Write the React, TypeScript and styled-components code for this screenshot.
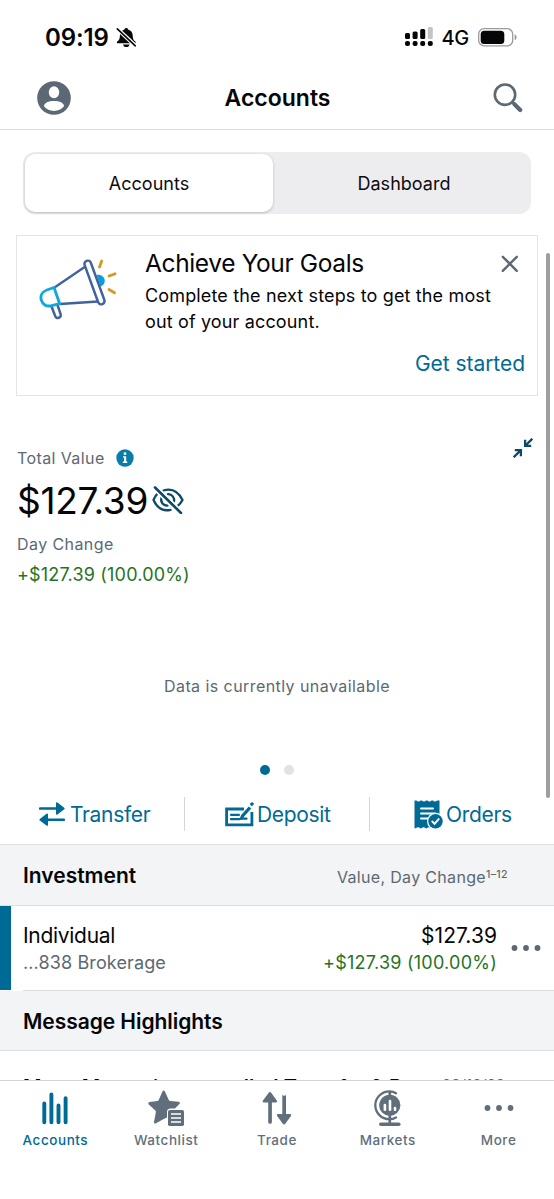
import React from "react";
import styled, { createGlobalStyle } from "styled-components";

const blue = "#006a96";
const navy = "#0b4a68";
const slate = "#5c6873";
const green = "#1f7424";
const line = "#dcdee0";
const band = "#f2f4f6";

const GlobalStyle = createGlobalStyle`
  * { box-sizing: border-box; }
  body { margin: 0; background: #fff; }
`;

const Screen = styled.div`
  position: relative;
  display: flex;
  flex-direction: column;
  width: 554px;
  height: 1199px;
  overflow: hidden;
  background: #fff;
  color: #060608;
  font-family: Inter, "Liberation Sans", sans-serif;
  svg { display: block; flex: none; }
`;

const Label = styled.span<{
  $size: number;
  $weight?: number;
  $track?: number;
  $color?: string;
  $lh?: number;
}>`
  font-size: ${(p) => p.$size}px;
  font-weight: ${(p) => p.$weight ?? 400};
  letter-spacing: ${(p) => p.$track ?? 0}px;
  color: ${(p) => p.$color ?? "inherit"};
  line-height: ${(p) => (p.$lh ? `${p.$lh}px` : "normal")};
  white-space: nowrap;
`;

const StatusBar = styled.div`
  display: flex;
  align-items: center;
  justify-content: space-between;
  height: 74px;
  padding: 0 37px 0 45px;
`;

const StatusGroup = styled.div<{ $gap: number }>`
  display: flex;
  align-items: center;
  gap: ${(p) => p.$gap}px;
`;

const Network = styled.span`
  padding-top: 2px;
  font-size: 20px;
  font-weight: 450;
  line-height: 26px;
  letter-spacing: -0.3px;
`;

const Header = styled.header`
  display: grid;
  grid-template-columns: 34px 1fr 30px;
  align-items: center;
  height: 56px;
  padding: 0 31px 8px 37px;
  border-bottom: 1px solid ${line};
`;

const Title = styled.h1`
  margin: 0 5px 0 -4px;
  padding-top: 1px;
  text-align: center;
  font-size: 23px;
  font-weight: 600;
  letter-spacing: 0;
`;

const Segments = styled.div`
  display: flex;
  height: 62px;
  margin: 22px 23px 0;
  padding: 2px;
  border-radius: 12px;
  background: #ededef;
`;

const Segment = styled.button<{ $on?: boolean }>`
  flex: ${(p) => (p.$on ? "0 0 248px" : "1")};
  padding: 1px 0 0;
  padding-left: ${(p) => (p.$on ? 0 : 6)}px;
  border: 0;
  border-radius: 10px;
  background: ${(p) => (p.$on ? "#fff" : "transparent")};
  box-shadow: ${(p) => (p.$on ? "0 1px 3px rgba(0,0,0,.22)" : "none")};
  color: #0c0c0e;
  font: 400 18px Inter, sans-serif;
  letter-spacing: 0.02px;
`;

const Promo = styled.section`
  display: grid;
  grid-template-columns: 128px 1fr 18px;
  height: 161px;
  margin: 21px 16px 0;
  padding: 11px 18px 0 0;
  border: 1px solid #e3e4e6;
`;

const PromoArt = styled.div`
  padding: 12px 0 0 22px;
`;

const PromoBody = styled.div`
  display: flex;
  flex-direction: column;
`;

const PromoText = styled.p`
  margin: 4px 0 0;
  font-size: 18px;
  line-height: 26px;
  letter-spacing: 0.15px;
  white-space: nowrap;
`;

const PromoClose = styled.div`
  padding-top: 8px;
`;

const PromoLink = styled.a`
  align-self: flex-end;
  margin: 15px -24px 0 0;
  color: ${blue};
  font-size: 21px;
  line-height: 28px;
  letter-spacing: -0.05px;
`;

const Summary = styled.section`
  display: flex;
  justify-content: space-between;
  height: 275px;
  padding: 47px 21px 0 17px;
`;

const Figures = styled.div`
  display: flex;
  flex-direction: column;
  align-items: flex-start;
`;

const FigureRow = styled.div<{ $h: number; $gap: number }>`
  display: flex;
  align-items: center;
  height: ${(p) => p.$h}px;
  gap: ${(p) => p.$gap}px;
`;

const CollapseSlot = styled.div`
  margin-top: -5px;
`;

const Unavailable = styled.p`
  margin: 0;
  text-align: center;
  color: ${slate};
  font-size: 16px;
  line-height: 30px;
  letter-spacing: 0.43px;
`;

const Dots = styled.div`
  display: flex;
  justify-content: center;
  gap: 14px;
  margin: 64px 1px 0 0;
`;

const Dot = styled.i<{ $on?: boolean }>`
  width: 10px;
  height: 10px;
  border-radius: 50%;
  background: ${(p) => (p.$on ? blue : "#e1e2e4")};
`;

const Actions = styled.div`
  display: grid;
  grid-template-columns: 185px 185px 184px;
  height: 34px;
  margin: 22px 0 13px;
`;

const Action = styled.button<{ $lead: number }>`
  display: flex;
  align-items: center;
  gap: 4px;
  padding: 0 0 0 ${(p) => p.$lead}px;
  border: 0;
  border-right: 1px solid #d3d5d7;
  background: none;
  color: ${blue};
  font-family: inherit;
  &:last-child { border-right: 0; }
`;

const Band = styled.div<{ $h: number; $top?: boolean }>`
  display: flex;
  align-items: center;
  justify-content: space-between;
  height: ${(p) => p.$h}px;
  padding: ${(p) => (p.$top ? 0 : 2)}px 46px 0 23px;
  background: ${band};
  border-top: ${(p) => (p.$top ? `1px solid ${line}` : "0")};
  border-bottom: 1px solid ${line};
`;

const ColumnNote = styled.span`
  padding-top: 3px;
  color: ${slate};
  font-size: 16px;
  letter-spacing: 0.32px;
  white-space: nowrap;
`;

const Footnote = styled.sup`
  font-size: 10.5px;
  font-weight: 500;
  line-height: 0;
  vertical-align: 5px;
  letter-spacing: 0.4px;
`;

const AccountRow = styled.div`
  display: flex;
  align-items: center;
  height: 84px;
  padding: 2px 13px 0 12px;
  border-left: 11px solid ${blue};
`;

const Stack = styled.div<{ $end?: boolean }>`
  display: flex;
  flex-direction: column;
  align-items: ${(p) => (p.$end ? "flex-end" : "flex-start")};
  margin-left: ${(p) => (p.$end ? "auto" : "0")};
`;

const RowMenu = styled.div`
  margin: -2px 0 0 14px;
`;

const InsetRule = styled.hr`
  width: 531px;
  height: 1px;
  margin: 0 0 0 23px;
  border: 0;
  background: ${line};
`;

const Message = styled.div`
  display: flex;
  justify-content: space-between;
  height: 29px;
  padding: 23px 49px 0 23px;
  overflow: hidden;
`;

const TabBar = styled.nav`
  display: grid;
  grid-template-columns: repeat(5, 110.8px);
  flex: 1;
  border-top: 1px solid #d3d5d7;
  background: #fff;
`;

const Tab = styled.a<{ $on?: boolean }>`
  display: flex;
  flex-direction: column;
  align-items: center;
  gap: 6px;
  padding-top: 9px;
  color: ${(p) => (p.$on ? blue : "#616f7c")};
`;

const ScrollThumb = styled.div`
  position: absolute;
  top: 253px;
  right: 4px;
  width: 4px;
  height: 545px;
  border-radius: 2px;
  background: #9e9e9f;
`;

const BellOff = () => (
  <svg width="21" height="21" viewBox="0 0 21 21">
    <path fill="#060608" d="M10.300 1c-1 0-1.800.7-2 1.700C5.500 3.500 4 5.500 3.900 8.500c0 3.200-.8 4.500-2.600 6-.8.800-.4 1.800.6 1.800h16.800c1 0 1.400-1 .6-1.800-1.800-1.500-2.600-2.800-2.600-6 0-3-1.600-5-4.400-5.800-.2-1-1-1.700-2-1.700zM7 17.500h6.600c-.3 1.600-1.600 2.600-3.300 2.600s-3-1-3.300-2.600z" />
    <path stroke="#fff" strokeWidth="4" d="M0 .6l21 19.600" />
    <path stroke="#060608" strokeWidth="1.600" strokeLinecap="round" d="M1.300 1.800l18 17" />
  </svg>
);

const Signal = () => (
  <svg width="28" height="20" viewBox="0 0 28 20" fill="#060608">
    <rect x="0" y="6" width="5" height="6" rx="1.500" />
    <rect x="7.600" y="4.500" width="5" height="7.500" rx="1.500" />
    <rect x="15.200" y="2" width="5" height="10" rx="1.500" />
    <rect x="22.800" y="0" width="5" height="12" rx="1.500" fill="#c4c4c6" />
    {[0, 7.6, 15.2, 22.8].map((x) => (
      <rect key={x} x={x} y="14" width="5" height="5" rx="2" />
    ))}
  </svg>
);

const Battery = () => (
  <svg width="39" height="19" viewBox="0 0 39 19">
    <rect x=".7" y=".7" width="34" height="17.200" rx="5.500" fill="none" stroke="#9b9b9d" strokeWidth="1.300" />
    <rect x="2.700" y="2.700" width="23.600" height="13.200" rx="3.500" fill="#060608" />
    <path d="M36.600 6.300c1.300.4 2 1.700 2 3s-.7 2.600-2 3z" fill="#9b9b9d" />
  </svg>
);

const Profile = () => (
  <svg width="34" height="34" viewBox="0 0 34 34">
    <circle cx="17" cy="17" r="16.800" fill={slate} />
    <ellipse cx="17" cy="11.200" rx="5.200" ry="6" fill="#fff" />
    <path d="M7 25.300c0-3.400 4.500-5.300 10-5.300s10 1.900 10 5.300c-2.400 3-5.900 4.600-10 4.600s-7.600-1.600-10-4.600z" fill="#fff" />
  </svg>
);

const Search = () => (
  <svg width="30" height="30" viewBox="0 0 30 30" fill="none" stroke={slate}>
    <circle cx="12" cy="11.700" r="10.200" strokeWidth="2.600" />
    <path d="M19.300 19.100l2.500 2.500" strokeWidth="2.600" />
    <path d="M21.500 21.300l5.700 5.700" strokeWidth="4.200" strokeLinecap="round" />
  </svg>
);

const Megaphone = () => (
  <svg width="78" height="62" viewBox="0 0 78 62" fill="none" strokeLinecap="round" strokeLinejoin="round">
    <path d="M57.500 15.800c3.800-.5 7.400 1.200 8.100 4.600.7 3.200-1 6-4.300 6.900z" fill="#0c9ddb" />
    <path d="M15.500 28.500L46 7.800M21 45l38-2.500" stroke="#41629f" strokeWidth="2.300" />
    <rect x="-3.300" y="-23" width="6.600" height="46" rx="3.300" transform="translate(55.500 23.500) rotate(-20)" fill="#fff" stroke="#41629f" strokeWidth="2.500" />
    <path d="M12.500 47.500l3.600 9.300c.5 1.700 1.900 2.600 3.600 2s2.500-2 1.900-3.700L18.500 46" stroke="#41629f" strokeWidth="2.500" />
    <path d="M15 28.500l5.700 16.200-8.800 2.100c-4.500 1-8.300-1.600-9.500-5.400-1.400-4.400.7-8.700 5.500-10.400z" fill="#fff" stroke="#11a7d9" strokeWidth="2.900" />
    <path d="M60.500 8l2.200-6M70 17l6-2.200M70 30.500l5.500 3.300" stroke="#d99a1c" strokeWidth="2.900" />
  </svg>
);

const Close = () => (
  <svg width="18" height="18" viewBox="0 0 18 18" stroke={slate} strokeWidth="2.400" strokeLinecap="round">
    <path d="M1.800 1.800l14 14M15.800 1.800l-14 14" />
  </svg>
);

const Info = () => (
  <svg width="18" height="18" viewBox="0 0 18 18">
    <circle cx="9" cy="9" r="8.700" fill="#087da9" />
    <circle cx="9" cy="4.700" r="1.400" fill="#fff" />
    <path d="M7 7.300h3.200v5.300h1.100v1.300H6.800v-1.300H8V8.600H7z" fill="#fff" />
  </svg>
);

const EyeOff = () => (
  <svg width="32" height="28" viewBox="0 0 32 28" fill="none" stroke={navy} strokeWidth="2.300" strokeLinecap="round">
    <path d="M11.500 4.500c8.500-2.500 15 1.500 19 9.500-1.400 2.600-3 4.700-5.200 6.300M6 7.200C4 9 2.700 11 1.500 14c3.700 8 10 11.500 17 9.800" />
    <path d="M16 8.200c4-.2 6.800 3.600 6 7.300M9.500 11.500c-1.400 5 2 8.200 6 8.200" />
    <path d="M3 1.500l26 25.500" stroke="#fff" strokeWidth="6" strokeLinecap="butt" />
    <path d="M3 1.500l26 25.500" strokeWidth="2.600" />
  </svg>
);

const Collapse = () => (
  <svg width="20" height="20" viewBox="0 0 20 20" fill="none" stroke={navy} strokeWidth="2.300">
    <path d="M19.300.7l-7 7M12.100 1.800v6.100h6.100M.7 19.300l7-7M1.800 12.100h6.100v6.100" />
  </svg>
);

const TransferIcon = () => (
  <svg width="26" height="24" viewBox="0 0 26 24" fill={blue}>
    <path d="M1 5.300h16V1.200c0-.9.900-1.200 1.500-.6l6.700 5.100c.6.500.6 1.200 0 1.600l-6.700 5.100c-.6.500-1.500.2-1.500-.7V7.800H1a1.250 1.250 0 010-2.500zM25 16.500H9v-4.100c0-.9-.9-1.200-1.500-.6L.8 16.900c-.6.500-.6 1.200 0 1.600l6.700 5.100c.6.500 1.500.2 1.500-.7V19h16a1.250 1.250 0 000-2.500z" />
  </svg>
);

const DepositIcon = () => (
  <svg width="29" height="25" viewBox="0 0 29 25" fill="none" stroke={blue}>
    <path d="M19 7H1.600v15.800h25.300V10" strokeWidth="2.800" />
    <path d="M6 12.800h8M6 17.200h8l2.500-.5h5" strokeWidth="2.300" strokeLinecap="round" />
    <path d="M17 14.500l8-9" strokeWidth="3.300" />
    <path d="M26.800 2.200l.3-.3" strokeWidth="3.300" strokeLinecap="round" />
    <path d="M14.300 17.700l2-5 3 2.300z" fill={blue} stroke="none" />
  </svg>
);

const OrdersIcon = () => (
  <svg width="29" height="29" viewBox="0 0 29 29">
    <path fill={blue} d="M.5.500h2a2.200 1.600 0 004 0h1.500a2.200 1.600 0 004 0h1.500a2.200 1.600 0 004 0h1.500a2.200 1.600 0 004 0h2.500v27.800h-3a2.200 1.600 0 00-4 0h-1.500a2.200 1.600 0 00-4 0h-1.500a2.200 1.600 0 00-4 0h-1.500a2.200 1.600 0 00-4 0h-1.500z" />
    <path stroke="#fff" strokeWidth="2" strokeLinecap="round" d="M7 8.500h12M7 13.500h14M7 18.500h7" />
    <circle cx="21.500" cy="21.300" r="8.500" fill="#fff" />
    <circle cx="21.500" cy="21.300" r="7.200" fill={blue} />
    <path fill="none" stroke="#fff" strokeWidth="1.900" strokeLinecap="round" d="M18.300 21.500l2.300 2.400 4.100-4.800" />
  </svg>
);

const Ellipsis = ({ color }: { color: string }) => (
  <svg width="30" height="36" viewBox="0 0 30 36" fill={color}>
    <circle cx="3.500" cy="18" r="2.900" />
    <circle cx="15" cy="18" r="2.900" />
    <circle cx="26.500" cy="18" r="2.900" />
  </svg>
);

const BarsIcon = () => (
  <svg width="26" height="36" viewBox="0 0 26 36" stroke={blue} strokeWidth="3.900" strokeLinecap="round">
    <path d="M2.300 13.400V32.300M9.400 4.500V32.300M16.500 15.400V32.300M23.600 8.200V32.300" />
  </svg>
);

const StarList = () => (
  <svg width="36" height="36" viewBox="0 0 36 36" fill="#616f7c">
    <path d="M14.500 1.500c.6-1.300 1.800-1.300 2.400 0l3.900 8.500c.3.700.8 1 1.500 1.100l8.300.7c1.300.2 1.700 1.400.8 2.300l-4.400 4.400h-4.500c-2.300 0-3.500 1.400-3.500 3.600v5.300l-3.300 1.600-7.700 4.300c-1.100.6-2.200-.2-2-1.400l1.800-9.500c.2-.7 0-1.300-.5-1.800L.8 14.400c-.9-.9-.5-2.100.8-2.300l7.600-1c.7-.1 1.200-.5 1.500-1.100z" />
    <rect x="20" y="20" width="16" height="16" rx="1.800" />
    <path stroke="#fff" strokeWidth="1.500" d="M23 24h10M23 28h10M23 32h10" />
  </svg>
);

const TradeIcon = () => (
  <svg width="30" height="36" viewBox="0 0 30 36" fill="#616f7c">
    <path d="M6.200 32V12.500H2c-1.400 0-1.800-1-1-2l5.700-7.700c.8-1 1.700-1 2.500 0l5.600 7.700c.8 1 .4 2-1 2H9.900V32a1.850 1.850 0 01-3.700 0zM20.300 4V24h-4.100c-1.400 0-1.800 1-1 2l5.600 7.700c.8 1 1.700 1 2.500 0l5.600-7.700c.8-1 .4-2-1-2h-3.900V4a1.850 1.850 0 01-3.700 0z" />
  </svg>
);

const GlobeIcon = () => (
  <svg width="27" height="36" viewBox="0 0 27 36" fill="none" stroke="#616f7c">
    <path d="M22 3.200C20 1.900 17.800 1.400 15.500 1.400 7.500 1.400 1.300 7.800 1.300 15.300S7.500 29.200 15.500 29.200c2.300 0 4.500-.6 6.500-1.800" strokeWidth="2.300" strokeLinecap="round" />
    <circle cx="15.800" cy="15.300" r="10.600" fill="#616f7c" stroke="none" />
    <path d="M15.800 2v5M15.800 25v9" strokeWidth="2.700" />
    <path d="M6.800 34.200h18" strokeWidth="3.500" strokeLinecap="round" />
    <path d="M10.900 15v4.800M16 11v8.800M21 18v1.800" stroke="#fff" strokeWidth="2.600" strokeLinecap="round" />
  </svg>
);

const tabs = [
  { name: "Accounts", icon: <BarsIcon /> },
  { name: "Watchlist", icon: <StarList /> },
  { name: "Trade", icon: <TradeIcon /> },
  { name: "Markets", icon: <GlobeIcon /> },
  { name: "More", icon: <Ellipsis color="#616f7c" /> },
];

const actions = [
  { name: "Transfer", icon: <TransferIcon />, lead: 39, gap: 5 },
  { name: "Deposit", icon: <DepositIcon />, lead: 40, gap: 3 },
  { name: "Orders", icon: <OrdersIcon />, lead: 44, gap: 3 },
];

export default function App() {
  return (
    <Screen>
      <GlobalStyle />
      <StatusBar>
        <StatusGroup $gap={7}>
          <Label $size={24} $weight={600} $track={-0.1}>09:19</Label>
          <BellOff />
        </StatusGroup>
        <StatusGroup $gap={9}>
          <Signal />
          <Network>4G</Network>
          <Battery />
        </StatusGroup>
      </StatusBar>

      <Header>
        <Profile />
        <Title>Accounts</Title>
        <Search />
      </Header>

      <Segments>
        <Segment $on>Accounts</Segment>
        <Segment>Dashboard</Segment>
      </Segments>

      <Promo>
        <PromoArt><Megaphone /></PromoArt>
        <PromoBody>
          <Label $size={24.5} $lh={32} $track={-0.37}>Achieve Your Goals</Label>
          <PromoText>
            Complete the next steps to get the most
            <br />
            out of your account.
          </PromoText>
          <PromoLink>Get started</PromoLink>
        </PromoBody>
        <PromoClose><Close /></PromoClose>
      </Promo>

      <Summary>
        <Figures>
          <FigureRow $h={30} $gap={11}>
            <Label $size={16} $track={0.4} $color={slate}>Total Value</Label>
            <Info />
          </FigureRow>
          <FigureRow $h={54} $gap={4}>
            <Label $size={37} $track={-0.3}>$127.39</Label>
            <EyeOff />
          </FigureRow>
          <FigureRow $h={33} $gap={0}>
            <Label $size={16} $track={0.42} $color={slate}>Day Change</Label>
          </FigureRow>
          <FigureRow $h={29} $gap={0}>
            <Label $size={18} $track={0.18} $color={green}>+$127.39 (100.00%)</Label>
          </FigureRow>
        </Figures>
        <CollapseSlot><Collapse /></CollapseSlot>
      </Summary>
      <Unavailable>Data is currently unavailable</Unavailable>
      <Dots><Dot $on /><Dot /></Dots>

      <Actions>
        {actions.map((a) => (
          <Action key={a.name} $lead={a.lead}>
            <StatusGroup $gap={a.gap}>
              {a.icon}
              <Label $size={21} $track={-0.33}>{a.name}</Label>
            </StatusGroup>
          </Action>
        ))}
      </Actions>

      <Band $h={62} $top>
        <Label $size={21} $weight={600}>Investment</Label>
        <ColumnNote>
          Value, Day Change<Footnote>1–12</Footnote>
        </ColumnNote>
      </Band>
      <AccountRow>
        <Stack>
          <Label $size={21} $lh={26} $track={-0.3}>Individual</Label>
          <Label $size={18} $lh={27} $track={0.12} $color={slate}>...838 Brokerage</Label>
        </Stack>
        <Stack $end>
          <Label $size={21} $lh={26} $track={0.05}>$127.39</Label>
          <Label $size={18} $lh={27} $track={0.24} $color={green}>+$127.39 (100.00%)</Label>
        </Stack>
        <RowMenu><Ellipsis color={slate} /></RowMenu>
      </AccountRow>
      <InsetRule />
      <Band $h={60}>
        <Label $size={21} $weight={600} $track={-0.05}>Message Highlights</Label>
      </Band>
      <Message>
        <Label $size={20} $weight={600} $lh={27} $track={0.03}>Move Money is now called Transfer &amp; Pay</Label>
        <Label $size={15} $lh={21} $color={slate}>09/16/22</Label>
      </Message>

      <TabBar>
        {tabs.map((t, i) => (
          <Tab key={t.name} $on={i === 0}>
            {t.icon}
            <Label $size={13.5} $weight={500} $track={0.55}>{t.name}</Label>
          </Tab>
        ))}
      </TabBar>
      <ScrollThumb />
    </Screen>
  );
}
